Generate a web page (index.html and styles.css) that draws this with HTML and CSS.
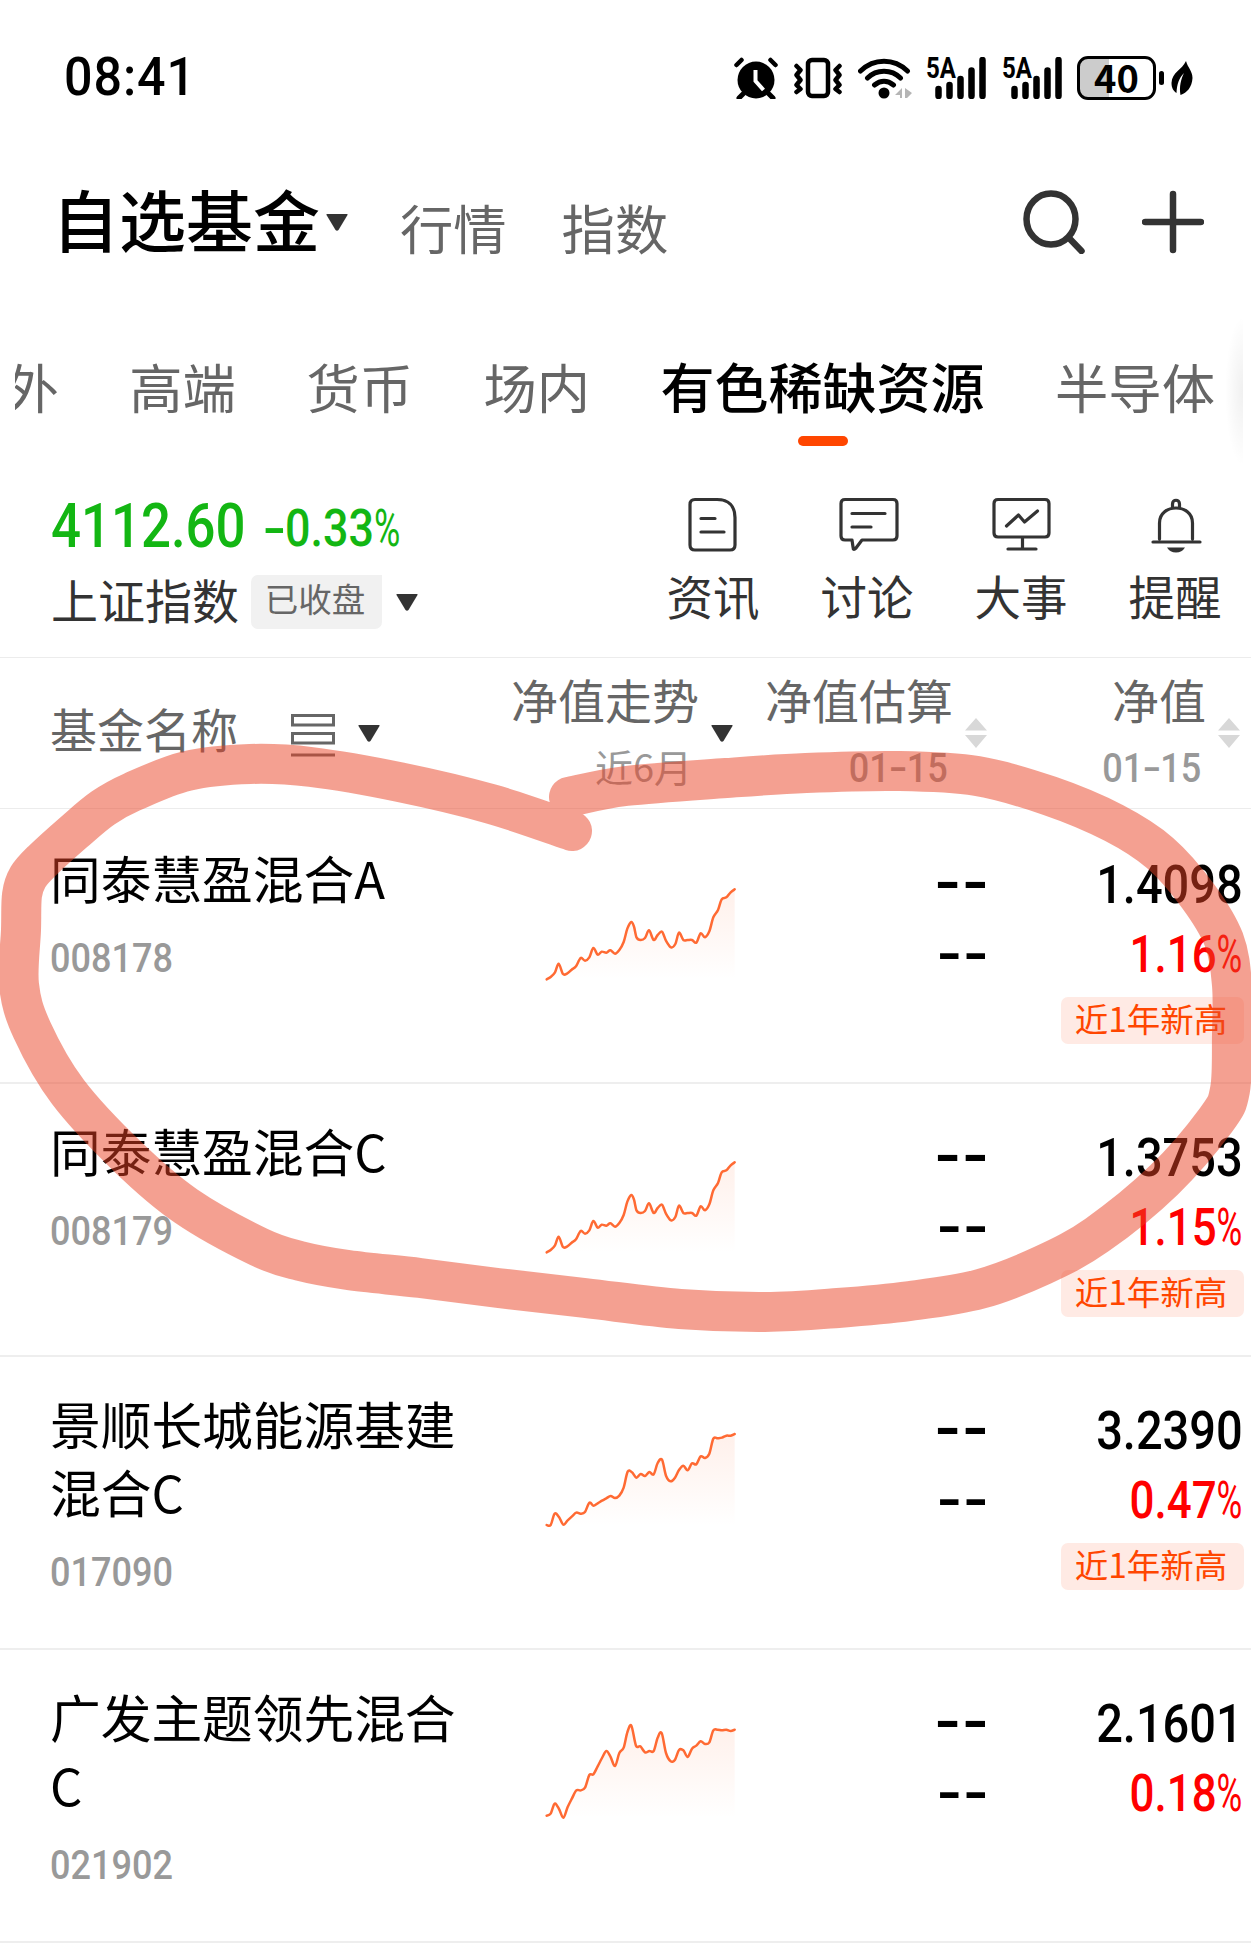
FILE: index.html
```html
<!DOCTYPE html>
<html lang="zh-CN">
<head>
    <meta charset="UTF-8">
    <meta name="viewport" content="width=device-width, initial-scale=1.0">
    <title>自选基金</title>
    <link rel="stylesheet" href="styles.css">
</head>
<body>
    <div class="status-bar">
        <span class="time">08:41</span>
        <div class="status-icons">
            <svg class="alarm" width="44" height="42" viewBox="0 0 44 42">
                <circle cx="22" cy="23" r="18.5"/>
                <path d="M9 37l-4 4M35 37l4 4" stroke="#000" stroke-width="5" stroke-linecap="round"/>
                <path d="M2.500 8l5-5M41.500 8l-5-5" stroke="#000" stroke-width="4.500" stroke-linecap="round"/>
                <path d="M21.500 13v11l8 9" fill="none" stroke="#fff" stroke-width="4"/>
            </svg>
            <svg class="vibrate" width="48" height="42" viewBox="0 0 48 42" fill="none" stroke="#000">
                <rect x="14" y="3" width="20" height="36" rx="4" stroke-width="4.500"/>
                <path d="M2.500 9l4 4-4 5 4 5-4 5 4 4-4 3M45.500 9l-4 4 4 5-4 5 4 5-4 4 4 3" stroke-width="4.500" stroke-linecap="round" stroke-linejoin="round"/>
            </svg>
            <svg class="wifi" width="54" height="42" viewBox="0 0 54 42" fill="none" stroke="#000" stroke-width="5" stroke-linecap="round">
                <path d="M2.500 14C16 1 36 1 49.500 14M9.500 21c9-9 24-9 33 0M16.500 28c6-5 13-5 19 0"/>
                <circle cx="26" cy="36" r="5.500" fill="#000" stroke="none"/>
                <path d="M44 31v10h-2v-3h-5zM47 31l7 5-5 5h-2z" fill="#b5b5b5" stroke="none"/>
            </svg>
            <div class="signal">
                <span>5A</span>
                <svg width="60" height="42" viewBox="0 0 60 42">
                    <path d="M12.500 32v7M23.500 28v11M34.500 22v17M45.500 13.500v25.500M56.500 3v36" stroke="#000" stroke-width="6.500" stroke-linecap="round"/>
                </svg>
            </div>
            <div class="signal">
                <span>5A</span>
                <svg width="60" height="42" viewBox="0 0 60 42">
                    <path d="M12.500 32v7M23.500 28v11M34.500 22v17M45.500 13.500v25.500M56.500 3v36" stroke="#000" stroke-width="6.500" stroke-linecap="round"/>
                </svg>
            </div>
            <div class="battery"><span>40</span></div>
            <svg class="leaf" width="22" height="36" viewBox="0 0 22 36">
                <path d="M15 1C11 10 1 12 .500 23c0 5 2 8 5 10C6 24 8 18 13 13 10 19 8 27 9.500 35 16 33 21 27 21.500 18 21.500 11 17 8 15 1z"/>
            </svg>
        </div>
    </div>

    <header class="header">
        <h1 class="title">自选基金</h1>
        <svg class="title-arrow" width="22" height="17" viewBox="0 0 22 17"><path d="M1 0h20q1 0 .500 1L12.500 16q-1.500 1.500-3 0L.500 1Q0 0 1 0z"/></svg>
        <a class="nav">行情</a>
        <a class="nav">指数</a>
        <div class="header-icons">
            <svg width="62" height="64" viewBox="0 0 62 64"><ellipse cx="28" cy="29" rx="24.500" ry="25.500"/><path d="M46 48l12.500 13"/></svg>
            <svg width="62" height="64" viewBox="0 0 62 64"><path d="M31 4v56M3 32h56"/></svg>
        </div>
    </header>

    <nav class="tabs">
        <div class="tab-scroll">
            <span class="tab">外</span>
            <span class="tab">高端</span>
            <span class="tab">货币</span>
            <span class="tab">场内</span>
            <span class="tab active">有色稀缺资源</span>
            <span class="tab">半导体</span>
        </div>
        <div class="tab-shadow"></div>
    </nav>

    <section class="index-bar">
        <div class="index">
            <div class="index-values">
                <span class="num index-price">4112.60</span>
                <span class="num index-change"><i class="minus">-</i>0.33<i class="pct">%</i></span>
            </div>
            <div class="index-info">
                <span class="index-name">上证指数</span>
                <span class="index-state">已收盘</span>
                <svg class="arrow" width="22" height="17" viewBox="0 0 22 17"><path d="M1 0h20q1 0 .500 1L12.500 16q-1.500 1.500-3 0L.500 1Q0 0 1 0z"/></svg>
            </div>
        </div>
        <div class="actions">
            <div class="action">
                <svg width="60" height="54" viewBox="0 0 60 54"><path d="M12 1.500h22c12 0 18 7 18 18V47q0 5-5 5H12q-5 0-5-5V6.500q0-5 5-5zM18 20.500h14M18 34h23"/></svg>
                <span>资讯</span>
            </div>
            <div class="action">
                <svg width="60" height="54" viewBox="0 0 60 54"><path d="M8 1.500h48q4 0 4 4V38q0 4-4 4H25l-6 8q-3 3-3-1l-1-7H8q-4 0-4-4V5.500q0-4 4-4zM15 15.500h33M15 29h19"/></svg>
                <span>讨论</span>
            </div>
            <div class="action">
                <svg width="60" height="54" viewBox="0 0 60 54"><path d="M7 1.500h47q4 0 4 4V35q0 4-4 4H7q-4 0-4-4V5.500q0-4 4-4zM31.500 39v12M17 51h28M15.500 28l12-11 6 7 13-11"/></svg>
                <span>大事</span>
            </div>
            <div class="action">
                <svg width="60" height="54" viewBox="0 0 60 54"><path d="M14.500 41V25c0-20 33-20 33 0v16M8 44h47M27.500 9V6c0-5 7-5 7 0v3" /><path class="solid" d="M22 49.500h18q-3 5-9 5t-9-5z"/></svg>
                <span>提醒</span>
            </div>
        </div>
    </section>

    <div class="table-head">
        <div class="th th-name">
            <span>基金名称</span>
            <svg class="list-icon" width="44" height="43" viewBox="0 0 44 43"><path d="M1.500 1.500h41v9.500h-41zM1.500 19.500h41V29h-41zM0 41h44"/></svg>
            <svg class="arrow" width="22" height="17" viewBox="0 0 22 17"><path d="M1 0h20q1 0 .500 1L12.500 16q-1.500 1.500-3 0L.500 1Q0 0 1 0z"/></svg>
        </div>
        <div class="th">
            <div class="th-text">净值走势<small>近6月</small></div>
            <svg class="arrow" width="22" height="17" viewBox="0 0 22 17"><path d="M1 0h20q1 0 .500 1L12.500 16q-1.500 1.500-3 0L.500 1Q0 0 1 0z"/></svg>
        </div>
        <div class="th">
            <div class="th-text">净值估算<small class="num">01<i class="minus">-</i>15</small></div>
            <svg class="sort" width="22" height="30" viewBox="0 0 22 30"><path d="M11 0l11 12.500H0zM0 17h22L11 30z"/></svg>
        </div>
        <div class="th">
            <div class="th-text">净值<small class="num">01<i class="minus">-</i>15</small></div>
            <svg class="sort" width="22" height="30" viewBox="0 0 22 30"><path d="M11 0l11 12.500H0zM0 17h22L11 30z"/></svg>
        </div>
    </div>

    <main class="funds">
        <div class="fund">
            <div class="fund-name">同泰慧盈混合A<span class="num code">008178</span></div>
            <svg class="trend" data-trend="rise" viewBox="0 0 690 390"></svg>
            <div class="estimate"><span>--</span><span class="small">--</span></div>
            <div class="value">
                <span class="num price">1.4098</span>
                <span class="num change">1.16<i class="pct">%</i></span>
                <span class="badge">近1年新高</span>
            </div>
        </div>
        <div class="fund">
            <div class="fund-name">同泰慧盈混合C<span class="num code">008179</span></div>
            <svg class="trend" data-trend="rise" viewBox="0 0 690 390"></svg>
            <div class="estimate"><span>--</span><span class="small">--</span></div>
            <div class="value">
                <span class="num price">1.3753</span>
                <span class="num change">1.15<i class="pct">%</i></span>
                <span class="badge">近1年新高</span>
            </div>
        </div>
        <div class="fund tall">
            <div class="fund-name">景顺长城能源基建混合C<span class="num code">017090</span></div>
            <svg class="trend" data-trend="energy" viewBox="0 0 690 390"></svg>
            <div class="estimate"><span>--</span><span class="small">--</span></div>
            <div class="value">
                <span class="num price">3.2390</span>
                <span class="num change">0.47<i class="pct">%</i></span>
                <span class="badge">近1年新高</span>
            </div>
        </div>
        <div class="fund tall">
            <div class="fund-name">广发主题领先混合C<span class="num code">021902</span></div>
            <svg class="trend" data-trend="theme" viewBox="0 0 690 390"></svg>
            <div class="estimate"><span>--</span><span class="small">--</span></div>
            <div class="value">
                <span class="num price">2.1601</span>
                <span class="num change">0.18<i class="pct">%</i></span>
            </div>
        </div>
    </main>

    <!-- hand-drawn highlight over the list -->
    <svg class="marker" width="1251" height="1952" viewBox="0 0 1251 1952"><path id="marker"/></svg>

    <script src="script.js"></script>
</body>
</html>
```
FILE: styles.css
```css
* {
    margin: 0;
    padding: 0;
    box-sizing: border-box;
}

body {
    position: relative;
    width: 1251px;
    height: 1952px;
    overflow: hidden;
    background: #fff;
    color: #000;
    font-family: "Noto Sans CJK SC", sans-serif;
}

svg {
    display: block;
    flex: none;
}

/* narrow figures */
.num {
    display: inline-block;
    font-family: Roboto, sans-serif;
    font-weight: 500;
    transform: scaleX(0.88);
    transform-origin: left center;
    white-space: nowrap;
}

.pct {
    display: inline-block;
    font-style: normal;
    font-weight: 400;
    transform: scaleX(0.8);
    transform-origin: left center;
    margin-right: -0.15em;
}

.minus {
    display: inline-block;
    font-style: normal;
    width: 0.47em;
    text-align: center;
    transform: scaleX(1.5);
}

/* status bar */
.status-bar {
    height: 153px;
    padding: 0 58px 0 64px;
    display: flex;
    align-items: center;
    justify-content: space-between;
}

.time {
    font-family: Roboto, sans-serif;
    font-weight: 500;
    font-size: 54px;
    letter-spacing: 1px;
    transform: scaleX(0.93);
    transform-origin: left center;
}

.status-icons {
    display: flex;
    align-items: center;
    padding-top: 3px;
}

.vibrate {
    margin-left: 16px;
}

.wifi {
    margin-left: 16px;
}

.signal {
    position: relative;
    margin-left: 14px;
}

.signal + .signal {
    margin-left: 16px;
}

.signal span {
    position: absolute;
    top: -1px;
    left: 0;
    font-family: Roboto, sans-serif;
    font-size: 29px;
    font-weight: 700;
    line-height: 24px;
    transform: scaleX(0.83);
    transform-origin: left center;
}

.battery {
    position: relative;
    width: 79px;
    height: 44px;
    margin: 0 8px 0 15px;
    border: 3px solid #000;
    border-radius: 11px;
    background: linear-gradient(to right, #ccc 40%, #fff 40%);
    font-size: 38px;
    font-weight: 700;
    line-height: 36px;
    text-align: center;
}

.battery::after {
    content: "";
    position: absolute;
    top: 12px;
    right: -11px;
    width: 5px;
    height: 14px;
    border-radius: 2.5px;
    background: #000;
}

.leaf {
    margin-left: 7px;
}

/* header */
.header {
    height: 138px;
    padding: 0 47px 0 52px;
    display: flex;
    align-items: center;
}

.title {
    font-size: 67px;
    font-weight: 500;
    line-height: 80px;
    padding-bottom: 9px;
}

.title-arrow {
    margin-left: 6px;
}

.title-arrow,
.arrow {
    fill: #333;
}

.nav {
    font-size: 53.3px;
    line-height: 70px;
    color: #666;
    padding-top: 9px;
    margin-left: 52px;
}

.nav + .nav {
    margin-left: 55px;
}

.header-icons {
    display: flex;
    gap: 57px;
    margin-left: auto;
    fill: none;
    stroke: #333;
    stroke-width: 6.5;
    stroke-linecap: round;
}

/* tabs */
.tabs {
    position: relative;
    height: 188px;
    padding: 55px 8px 0 15px;
}

.tab-scroll {
    display: flex;
    gap: 70.5px;
    overflow: hidden;
    height: 110px;
}

.tab {
    flex: none;
    font-size: 53.3px;
    line-height: 80px;
    color: #666;
}

.tab:first-child {
    margin-left: -9.5px;
}

.tab.active {
    font-size: 54px;
    font-weight: 500;
    color: #000;
}

.tab.active::after {
    content: "";
    display: block;
    width: 50px;
    height: 10px;
    margin: 10px auto 0;
    border-radius: 5px;
    background: #ff4600;
}

.tab-shadow {
    position: absolute;
    top: 25px;
    right: 8px;
    width: 18px;
    height: 150px;
    background: radial-gradient(ellipse 18px 75px at right center, rgba(0, 0, 0, 0.06), transparent);
}

/* index bar */
.index-bar {
    height: 179px;
    border-bottom: 1px solid #ececec;
    padding: 17px 0 0 51px;
    display: flex;
}

.index-values {
    height: 60px;
    line-height: 60px;
    color: #13b613;
    display: flex;
}

.index-price {
    font-size: 61px;
    transform: scaleX(0.865);
}

.index-change {
    font-size: 51px;
    margin-left: -12px;
    padding-top: 3px;
}

.index-info {
    display: flex;
    margin-top: 19px;
    height: 54px;
}

.index-name {
    font-size: 47px;
    line-height: 48px;
    color: #333;
}

.index-state {
    width: 131px;
    margin-left: 12px;
    padding-right: 3px;
    background: #f1f1f1;
    border-radius: 7px 0 7px 7px;
    font-size: 33.5px;
    line-height: 46px;
    color: #666;
    text-align: center;
}

.index-info .arrow {
    margin: 19px 0 0 14px;
}

.actions {
    display: flex;
    margin: 2px -1px 0 auto;
}

.action {
    width: 154px;
    display: flex;
    flex-direction: column;
    align-items: center;
    font-size: 46.5px;
    line-height: 54px;
    color: #333;
}

.action svg {
    margin-bottom: 16px;
    fill: none;
    stroke: #333;
    stroke-width: 3.2;
    stroke-linecap: round;
    stroke-linejoin: round;
    overflow: visible;
}

.action .solid {
    fill: #333;
    stroke: none;
}

/* table head */
.table-head {
    height: 151px;
    border-bottom: 1px solid #ececec;
    display: grid;
    grid-template-columns: 500px 233px 254px 253px;
    align-items: center;
    font-size: 47px;
    color: #666;
}

.th {
    display: flex;
    justify-content: flex-end;
    align-items: center;
    gap: 12px;
    white-space: nowrap;
}

.th-name {
    justify-content: flex-start;
    gap: 0;
    padding-left: 50px;
}

.th-name span {
    line-height: 60px;
    padding-bottom: 11px;
}

.list-icon {
    margin: 4px 23px 0 53px;
    fill: none;
    stroke: #666;
    stroke-width: 3;
}

.th-text {
    text-align: right;
    line-height: 62px;
    padding-top: 3px;
}

.th-text small {
    display: block;
    font-size: 38px;
    line-height: 72px;
    height: 72px;
    color: #999;
    padding-right: 7px;
}

.th-text small.num {
    font-size: 41px;
    font-weight: 500;
    line-height: 76px;
    transform-origin: right center;
    padding-right: 6px;
}

.sort {
    fill: #d8d8d8;
}

/* fund list */
.fund {
    height: 273px;
    border-top: 2px solid #eee;
    display: grid;
    grid-template-columns: 530px 230px 227px 257px;
    align-items: start;
}

.fund:first-child {
    border-top-color: transparent;
}

.fund.tall {
    height: 293px;
}

.fund:last-child {
    height: 295px;
    border-bottom: 2px solid #eee;
}

.fund-name {
    width: 470px;
    padding: 32px 0 0 50px;
    font-size: 50.7px;
    line-height: 68px;
}

.code {
    display: block;
    margin-top: 25px;
    font-size: 41px;
    font-weight: 500;
    line-height: 44px;
    color: #999;
}

.trend {
    width: 230px;
    height: 130px;
    margin-top: 58px;
}

.estimate {
    padding-top: 38px;
    display: flex;
    flex-direction: column;
    align-items: flex-end;
    font-family: Roboto, sans-serif;
    font-weight: 500;
    font-size: 64px;
    line-height: 70px;
    letter-spacing: 2px;
}

.estimate span {
    transform: scaleX(1.17);
    transform-origin: right center;
    margin-right: -3px;
}

.estimate .small {
    font-size: 61px;
}

.value {
    padding-top: 39px;
    display: flex;
    flex-direction: column;
    align-items: flex-end;
}

.value .num {
    transform-origin: right center;
    padding-right: 2px;
    line-height: 70px;
}

.value .price {
    font-size: 54px;
    transform: scaleX(0.87);
}

.value .change {
    font-size: 51px;
    color: #f00;
    transform: scaleX(0.86);
}

.badge {
    width: 183px;
    height: 47px;
    margin-top: 7px;
    padding-right: 3px;
    border-radius: 7px;
    background: #ffeae4;
    color: #ff4600;
    font-size: 33.5px;
    line-height: 41px;
    text-align: center;
}

.marker {
    position: absolute;
    top: 0;
    left: 0;
    fill: none;
    stroke: rgba(234, 66, 36, 0.5);
    stroke-width: 40;
    stroke-linecap: round;
    stroke-linejoin: round;
    pointer-events: none;
}
```
FILE: script.js
```js
const trends = {
    rise: [[50,328],[62,321],[75,307],[86,281],[99,312],[112,310],[125,299],[138,289],[152,264],[165,272],[178,262],[190,234],[203,254],[215,245],[229,248],[241,241],[255,251],[268,240],[281,216],[292,176],[304,156],[312,170],[320,203],[332,210],[345,204],[357,181],[371,210],[383,195],[396,185],[408,212],[423,232],[436,222],[447,188],[460,210],[473,210],[486,210],[499,218],[512,190],[525,202],[538,184],[550,142],[564,120],[575,88],[589,82],[602,67],[614,58]],
    energy: [[50,318],[62,318],[74,284],[87,294],[100,317],[113,304],[126,292],[139,281],[152,284],[165,279],[178,251],[190,260],[203,253],[216,245],[229,238],[242,231],[255,237],[268,230],[281,206],[293,158],[306,160],[319,176],[332,165],[345,171],[358,159],[371,166],[383,132],[396,122],[408,170],[422,187],[435,176],[447,153],[460,140],[473,154],[486,133],[499,136],[512,112],[525,117],[538,104],[550,59],[563,58],[576,56],[589,50],[602,50],[614,45]],
    theme: [[50,320],[62,314],[74,284],[87,300],[100,326],[113,294],[126,268],[139,244],[152,244],[165,236],[178,198],[190,196],[203,172],[216,147],[229,126],[241,142],[255,171],[268,132],[281,116],[292,70],[304,50],[318,110],[331,112],[345,130],[358,126],[371,126],[383,86],[395,72],[408,132],[422,157],[435,152],[447,123],[460,124],[473,144],[486,119],[499,110],[512,97],[525,105],[538,100],[550,64],[563,62],[576,64],[589,62],[602,66],[614,62]]
};

const markerPoints = [[569,797],[626,786],[726,778],[806,773],[897,771],[977,776],[1050,796],[1114,823],[1160,853],[1198,896],[1224,940],[1232,985],[1232,1035],[1230,1090],[1216,1120],[1164,1180],[1097,1235],[1043,1265],[980,1289],[910,1301],[838,1308],[765,1312],[680,1309],[585,1298],[498,1288],[420,1278],[348,1270],[300,1261],[259,1247],[186,1206],[128,1157],[68,1092],[32,1030],[19,985],[21,930],[22,895],[28,877],[42,861],[74,832],[103,808],[132,792],[187,771],[250,764],[311,767],[399,782],[491,804],[572,831]];

// cubic curve that runs through all points
function smooth(points) {
    let d = 'M' + points[0];
    for (let i = 0; i < points.length - 1; i++) {
        const p0 = points[i - 1] || points[i];
        const p1 = points[i];
        const p2 = points[i + 1];
        const p3 = points[i + 2] || p2;
        d += ' C' + [
            p1[0] + (p2[0] - p0[0]) / 6, p1[1] + (p2[1] - p0[1]) / 6,
            p2[0] - (p3[0] - p1[0]) / 6, p2[1] - (p3[1] - p1[1]) / 6,
            p2[0], p2[1]
        ];
    }
    return d;
}

document.querySelectorAll('.trend').forEach((svg, i) => {
    const shift = svg.dataset.trend === 'energy' ? 12 : 3;
    const points = trends[svg.dataset.trend].map(([x, y]) => [x, y + shift]);
    const line = smooth(points);
    svg.innerHTML = `
        <linearGradient id="fill${i}" x1="0" y1="0" x2="0" y2="1">
            <stop offset="0" stop-color="#ff6a33" stop-opacity="0.1"/>
            <stop offset="1" stop-color="#ff6a33" stop-opacity="0"/>
        </linearGradient>
        <path d="${line} V330 H50 Z" fill="url(#fill${i})"/>
        <path d="${line}" fill="none" stroke="#ff6a33" stroke-width="7.5" stroke-linecap="round"/>`;
});

document.getElementById('marker').setAttribute('d', smooth(markerPoints));
```
